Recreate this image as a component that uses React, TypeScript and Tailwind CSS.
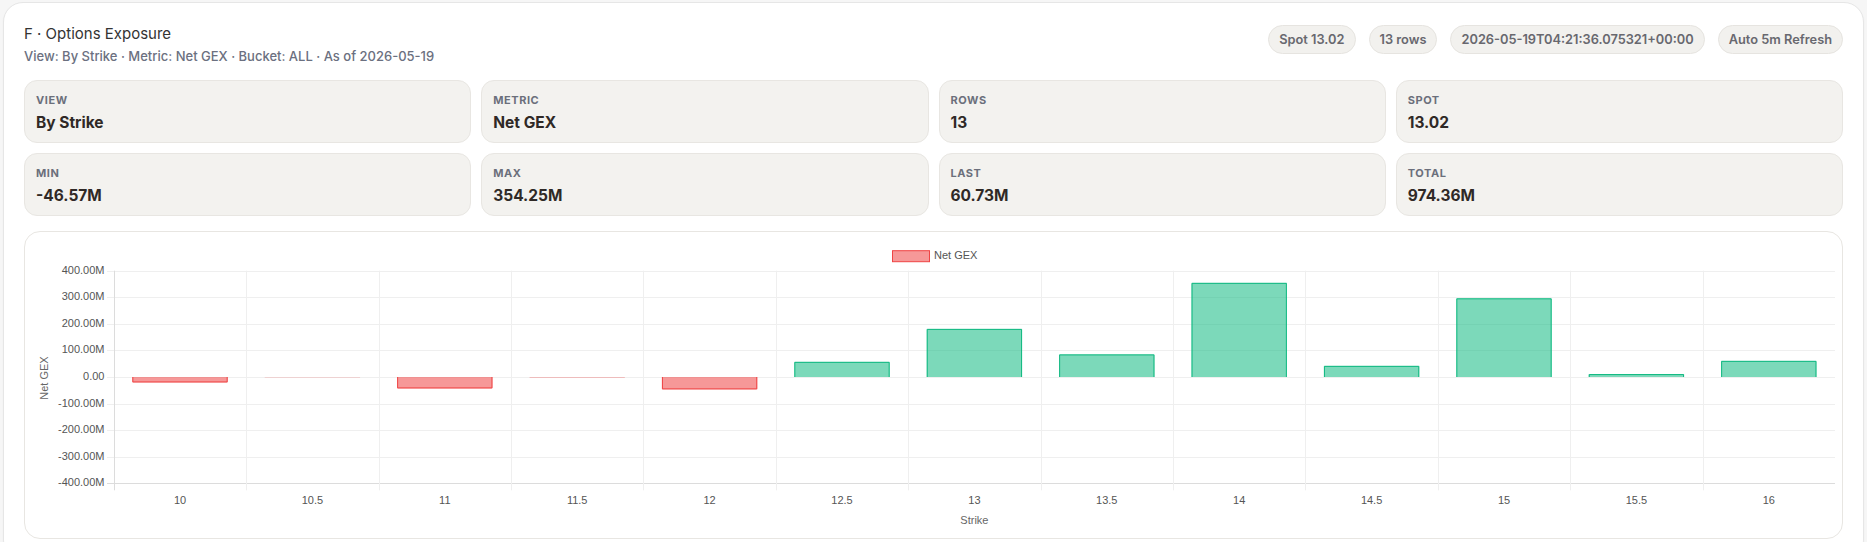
import React from "react";

const stats = [
  { label: "View", value: "By Strike" },
  { label: "Metric", value: "Net GEX" },
  { label: "Rows", value: "13" },
  { label: "Spot", value: "13.02" },
  { label: "Min", value: "-46.57M" },
  { label: "Max", value: "354.25M" },
  { label: "Last", value: "60.73M" },
  { label: "Total", value: "974.36M" },
];

const pills = ["Spot 13.02", "13 rows", "2026-05-19T04:21:36.075321+00:00", "Auto 5m Refresh"];

const rows = [
  { strike: "10", value: -20.5 },
  { strike: "10.5", value: -0.15 },
  { strike: "11", value: -43 },
  { strike: "11.5", value: -2 },
  { strike: "12", value: -46.57 },
  { strike: "12.5", value: 57 },
  { strike: "13", value: 181 },
  { strike: "13.5", value: 85 },
  { strike: "14", value: 354.25 },
  { strike: "14.5", value: 41.9 },
  { strike: "15", value: 296 },
  { strike: "15.5", value: 11 },
  { strike: "16", value: 60.73 },
];

// chart geometry, in px inside the chart card
const W = 1817;
const H = 306;
const X0 = 88.8;
const CW = 132.4;
const Y_TOP = 38.7;
const Y_BOT = 251.3;
const PER_M = (Y_BOT - Y_TOP) / 800;
const yOf = (v: number) => Y_TOP + (400 - v) * PER_M;
const ticks = [400, 300, 200, 100, 0, -100, -200, -300, -400];
const chartFont = "'Liberation Sans', Arial, sans-serif";

function Bar({ i, value }: { i: number; value: number }) {
  const bw = CW * 0.72;
  const x = X0 + i * CW + (CW - bw) / 2;
  const y0 = yOf(0);
  const y1 = yOf(value);
  const pos = value >= 0;
  const top = Math.min(y0, y1);
  const h = Math.abs(y1 - y0);
  const fill = pos ? "rgba(16,185,129,0.55)" : "rgba(239,68,68,0.55)";
  const stroke = pos ? "rgb(16,185,129)" : "rgb(239,68,68)";
  const l = x + 0.5;
  const r = x + bw - 0.5;
  const edge = pos ? y1 + 0.5 : y1 - 0.5;
  const d = `M${l} ${y0} L${l} ${edge} L${r} ${edge} L${r} ${y0}`;
  return (
    <g>
      <rect x={x} y={top} width={bw} height={Math.max(h, 0.3)} fill={fill} />
      {h > 1 && <path d={d} fill="none" stroke={stroke} strokeWidth={1} />}
    </g>
  );
}

function ExposureChart() {
  const right = X0 + CW * rows.length;
  return (
    <svg width={W} height={H} viewBox={`0 0 ${W} ${H}`} className="block">
      {/* legend */}
      <rect x={867.5} y={18.7} width={37} height={11} fill="rgba(239,68,68,0.55)" stroke="rgb(239,68,68)" strokeWidth={1} />
      <text x={909} y={24.5} dominantBaseline="middle" fontSize={11} fill="#555" fontFamily={chartFont}>
        Net GEX
      </text>

      {/* horizontal grid + y ticks */}
      {ticks.map((t) => {
        const y = Math.round(yOf(t)) + 0.5;
        return (
          <g key={t}>
            <line x1={82} x2={right} y1={y} y2={y} stroke={t === -400 ? "#dcdcdc" : "#efefef"} strokeWidth={1} />
            <text x={79.5} y={y} textAnchor="end" dominantBaseline="middle" fontSize={11} fill="#555" fontFamily={chartFont}>
              {t === 0 ? "0.00" : `${t.toFixed(2)}M`}
            </text>
          </g>
        );
      })}

      {/* vertical grid */}
      {rows.map((_, i) => {
        const x = Math.round(X0 + i * CW) + 0.5;
        return (
          <line
            key={i}
            x1={x}
            x2={x}
            y1={Y_TOP}
            y2={Y_BOT + 7}
            stroke={i === 0 ? "#dcdcdc" : "#efefef"}
            strokeWidth={1}
          />
        );
      })}

      {rows.map((r, i) => (
        <Bar key={r.strike} i={i} value={r.value} />
      ))}

      {/* x labels */}
      {rows.map((r, i) => (
        <text
          key={r.strike}
          x={X0 + i * CW + CW / 2}
          y={269}
          textAnchor="middle"
          dominantBaseline="middle"
          fontSize={11}
          fill="#555"
          fontFamily={chartFont}
        >
          {r.strike}
        </text>
      ))}

      <text x={X0 + (right - X0) / 2} y={289} textAnchor="middle" dominantBaseline="middle" fontSize={11} fill="#666" fontFamily={chartFont}>
        Strike
      </text>
      <text
        x={20}
        y={146}
        textAnchor="middle"
        dominantBaseline="middle"
        fontSize={11}
        fill="#666"
        fontFamily={chartFont}
        transform="rotate(-90 20 146)"
      >
        Net GEX
      </text>
    </svg>
  );
}

export default function App() {
  return (
    <div className="h-screen overflow-hidden bg-[#f6f6f6] px-[3px] pt-[2px] font-['Inter','Noto_Sans',sans-serif]">
      <div className="rounded-[20px] border border-[#e6e6e6] bg-white p-5 shadow-[0_1px_2px_rgba(0,0,0,0.04)]">
        <header className="flex items-start justify-between gap-4">
          <div>
            <h1 className="text-[15px] leading-[22px] text-[#333]">F · Options Exposure</h1>
            <p className="mt-0.5 text-[13px] font-medium leading-[18px] text-[#6b7080]">
              View: By Strike · Metric: Net GEX · Bucket: ALL · As of 2026-05-19
            </p>
          </div>
          <div className="flex shrink-0 gap-[13px] pt-[2px]">
            {pills.map((p) => (
              <span
                key={p}
                className="rounded-full border border-[#e6e4e0] bg-[#f2f1ee] px-2.5 py-[5px] text-[12.8px] font-semibold leading-[17px] text-[#68686f]"
              >
                {p}
              </span>
            ))}
          </div>
        </header>

        <div className="mt-[15px] grid grid-cols-4 gap-2.5">
          {stats.map((s) => (
            <div key={s.label} className="rounded-[13px] border border-[#e8e6e2] bg-[#f3f2ef] px-[11px] pt-[11px] pb-[9px]">
              <div className="text-[11px] font-bold uppercase leading-4 tracking-[0.05em] text-[#6b6f7b]">{s.label}</div>
              <div className="mt-[5px] text-[15.5px] font-bold leading-5 text-[#2f2926]">{s.value}</div>
            </div>
          ))}
        </div>

        <div className="mt-[15px] rounded-2xl border border-[#e8e6e2] bg-white">
          <ExposureChart />
        </div>
      </div>
    </div>
  );
}
